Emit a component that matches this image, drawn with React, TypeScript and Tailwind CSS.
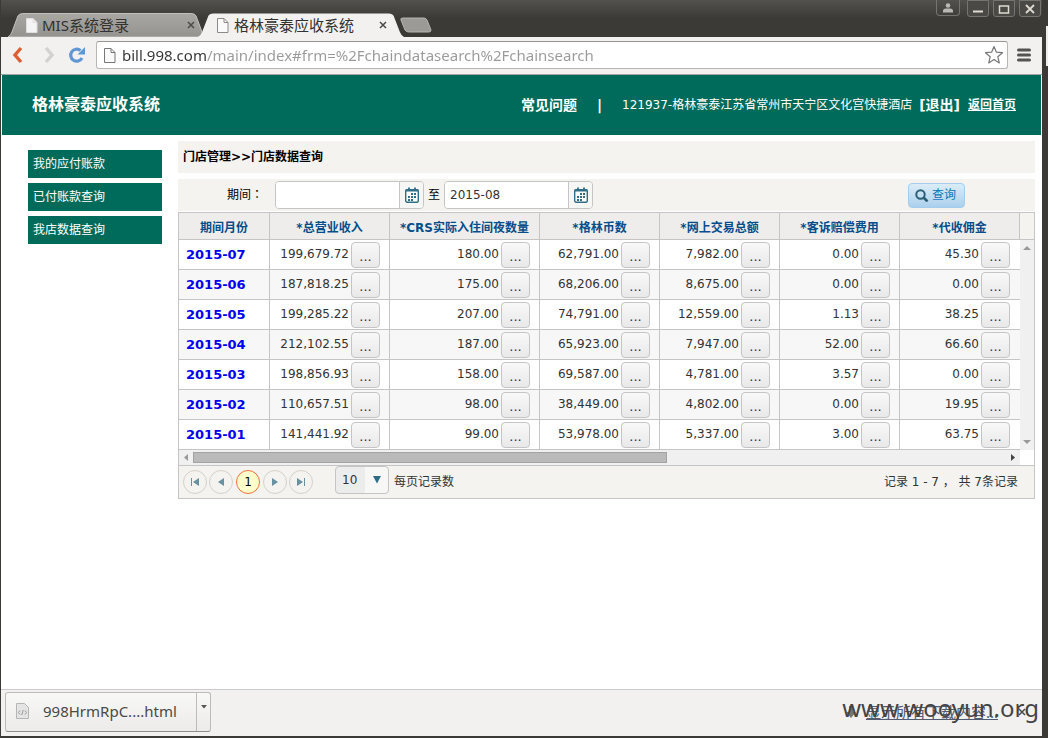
import React, { useState } from "react";
import clsx from "clsx";

const columns = ["*总营业收入", "*CRS实际入住间夜数量", "*格林币数", "*网上交易总额", "*客诉赔偿费用", "*代收佣金"];

const rows = [
  { month: "2015-07", values: ["199,679.72", "180.00", "62,791.00", "7,982.00", "0.00", "45.30"] },
  { month: "2015-06", values: ["187,818.25", "175.00", "68,206.00", "8,675.00", "0.00", "0.00"] },
  { month: "2015-05", values: ["199,285.22", "207.00", "74,791.00", "12,559.00", "1.13", "38.25"] },
  { month: "2015-04", values: ["212,102.55", "187.00", "65,923.00", "7,947.00", "52.00", "66.60"] },
  { month: "2015-03", values: ["198,856.93", "158.00", "69,587.00", "4,781.00", "3.57", "0.00"] },
  { month: "2015-02", values: ["110,657.51", "98.00", "38,449.00", "4,802.00", "0.00", "19.95"] },
  { month: "2015-01", values: ["141,441.92", "99.00", "53,978.00", "5,337.00", "3.00", "63.75"] },
];

const menuItems = ["我的应付账款", "已付账款查询", "我店数据查询"];

const PageIcon = ({ fill, stroke, className }: { fill: string; stroke: string; className?: string }) => (
  <svg width="12" height="15" viewBox="0 0 12 15" className={clsx("shrink-0", className)}>
    <path d="M.5 .5h6.5l4 4v10H.5z" fill={fill} stroke={stroke} />
    <path d="M7 .5v4h4" fill="none" stroke={stroke} />
  </svg>
);

const CloseIcon = ({ className }: { className?: string }) => (
  <svg width="8" height="8" viewBox="0 0 8 8" className={className}>
    <path d="M1 1l6 6M7 1L1 7" stroke="#4a4a48" strokeWidth="1.500" />
  </svg>
);

const Tab = ({ title, active }: { title: string; active?: boolean }) => (
  <div className={clsx("relative flex h-6 items-center", active ? "-ml-2 w-[206px] pl-[19px]" : "w-[198px] pl-[18px]")}>
    <svg viewBox="0 0 200 24" preserveAspectRatio="none" className="absolute inset-0 h-full w-full">
      <defs>
        <linearGradient id="tabShade" x1="0" y1="0" x2="0" y2="1">
          <stop offset="0" stopColor="#a8a7a4" />
          <stop offset="1" stopColor="#949390" />
        </linearGradient>
      </defs>
      <path
        d="M0 24Q3 22 4 19L10 3Q11 .5 15 .5H185Q189 .5 190 3L196 19Q197 22 200 24z"
        fill={active ? "#f2f1f0" : "url(#tabShade)"}
        stroke={active ? "none" : "#c0bfbb"}
        strokeWidth="1"
      />
    </svg>
    <PageIcon
      fill={active ? "#fafafa" : "#f4f4f4"}
      stroke={active ? "#8a8a8a" : "#dedede"}
      className="relative"
    />
    <span className={clsx("relative flex-1 text-[15px] leading-6 text-[#33322e]", active ? "ml-[5px]" : "ml-1")}>{title}</span>
    <button type="button" aria-label={"关闭 " + title} className={clsx("relative", active ? "mr-[17px]" : "mr-[11px]")}>
      <CloseIcon />
    </button>
  </div>
);

const WindowButton = ({ label, children }: { label: string; children: React.ReactNode }) => (
  <button
    type="button"
    aria-label={label}
    className="flex h-[17px] w-[22px] items-center justify-center rounded-b-[3px] border border-[#75746f] bg-[#4a4945]"
  >
    {children}
  </button>
);

const TitleBar = () => (
  <div className="flex h-[37px] items-start bg-linear-to-b from-[#52514c] to-[#3b3a36] to-50%">
    <div className="flex items-end self-end pl-[7px]">
      <Tab title="MIS系统登录" />
      <Tab title="格林豪泰应收系统" active />
      <button type="button" aria-label="新标签页" className="-ml-1 mb-1">
        <svg width="32" height="16" viewBox="0 0 32 16">
          <path d="M1 3Q0 1 3 1H24Q26 1 27 3L31 13Q31 15 29 15H9Q6 15 5 13z" fill="#9b9a97" stroke="#b5b4b0" />
        </svg>
      </button>
    </div>
    <div className="ml-auto flex gap-1 pr-px">
      <button
        type="button"
        aria-label="用户"
        className="mr-[3px] flex h-4 w-6 items-center justify-center rounded-b-[4px] border border-t-0 border-[#75746f]"
      >
        <svg width="10" height="10" viewBox="0 0 10 10" fill="#b9b8b4">
          <circle cx="5" cy="2.500" r="2.300" />
          <path d="M0 9.500V8Q0 5.500 3 5.500H7Q10 5.500 10 8V9.500z" />
        </svg>
      </button>
      <WindowButton label="最小化">
        <svg width="12" height="10"><path d="M1 7.500h10" stroke="#dfdbd2" strokeWidth="2" /></svg>
      </WindowButton>
      <WindowButton label="最大化">
        <svg width="12" height="10"><path d="M1.500 2h9v7h-9z" fill="none" stroke="#dfdbd2" strokeWidth="1.500" /></svg>
      </WindowButton>
      <WindowButton label="关闭">
        <svg width="12" height="10"><path d="M2 1l8 8M10 1L2 9" stroke="#dfdbd2" strokeWidth="1.800" /></svg>
      </WindowButton>
    </div>
  </div>
);

const Toolbar = () => (
  <div className="flex h-[38px] items-center border-b border-[#a5a4a2] bg-[#f2f1f0] pr-[11px] pb-px pl-[10px]">
    <button type="button" aria-label="后退">
      <svg width="14" height="18" viewBox="0 0 14 18">
        <path d="M10 2L4 9l6 7" fill="none" stroke="#dd6032" strokeWidth="3.400" />
      </svg>
    </button>
    <button type="button" aria-label="前进" className="ml-[17px]">
      <svg width="14" height="18" viewBox="0 0 14 18">
        <path d="M4 2l6 7-6 7" fill="none" stroke="#d3d1ce" strokeWidth="3.400" />
      </svg>
    </button>
    <button type="button" aria-label="重新加载" className="ml-3">
      <svg width="18" height="18" viewBox="0 0 18 18">
        <path d="M14 12A6 6 0 1 1 12.500 4.500" fill="none" stroke="#5f97d4" strokeWidth="3.200" />
        <path d="M17 1v7.500H9.500z" fill="#5f97d4" />
      </svg>
    </button>
    <div className="ml-[10px] flex h-7 flex-1 items-center rounded-[3px] border border-[#b8b6b3] border-t-[#989795] bg-white pr-[3px] pl-[7px]">
      <PageIcon fill="#fafafa" stroke="#777777" />
      <input
        aria-label="地址栏"
        defaultValue="bill.998.com/main/index#frm=%2Fchaindatasearch%2Fchainsearch"
        className="ml-[6px] h-6 min-w-0 flex-1 bg-[linear-gradient(90deg,#333333_85px,#999999_85px)] bg-clip-text text-[15px] text-transparent outline-none"
      />
      <button type="button" aria-label="收藏">
        <svg width="20" height="20" viewBox="0 0 20 20">
          <path
            d="M10 1.500l2.400 5.700 6.100.5-4.700 4 1.500 6.200-5.300-3.300-5.300 3.300 1.500-6.200-4.700-4 6.100-.5z"
            fill="#fff"
            stroke="#777"
            strokeWidth="1.200"
            strokeLinejoin="round"
          />
        </svg>
      </button>
    </div>
    <button type="button" aria-label="菜单" className="ml-[9px]">
      <svg width="14" height="14" viewBox="0 0 14 14">
        <path d="M1.500 2h11M1.500 7h11M1.500 12h11" stroke="#55534f" strokeWidth="3" strokeLinecap="round" />
      </svg>
    </button>
  </div>
);

const DateField = ({ label, initial }: { label: string; initial: string }) => (
  <div className="flex h-7 w-[149px] overflow-hidden rounded-[4px] border border-[#c5c5c5]">
    <input aria-label={label} defaultValue={initial} className="min-w-0 flex-1 bg-white pl-[5px] text-xs text-[#333333] outline-none" />
    <button
      type="button"
      aria-label={label + "日历"}
      className="flex w-6 items-center justify-center border-l border-[#c5c5c5] bg-[#f6f6f4]"
    >
      <svg width="14" height="16" viewBox="0 0 14 16">
        <rect x=".7" y="2.700" width="12.600" height="12.600" rx="1.500" fill="#fff" stroke="#2e6e86" strokeWidth="1.400" />
        <path d="M.5 3.500h13" stroke="#2e6e86" strokeWidth="2" />
        <path d="M4 .5v3M10 .5v3" stroke="#2e6e86" strokeWidth="1.800" />
        <path d="M6 7h6M3 10h8M3 13h5" stroke="#2e6e86" strokeWidth="2" strokeDasharray="2 1" />
      </svg>
    </button>
  </div>
);

const PagerButton = ({ label, d }: { label: string; d: string }) => (
  <button type="button" aria-label={label} className="flex h-6 w-6 items-center justify-center rounded-full border border-[#d4d1ca]">
    <svg width="10" height="8" viewBox="0 0 10 8" fill="#6790a0">
      <path d={d} />
    </svg>
  </button>
);

const DataGrid = () => {
  const [pageSize, setPageSize] = useState("10");

  return (
    <div className="mt-px border border-[#c5c5c5] text-[#333333]">
      <div className="flex">
        <div className="min-w-0 flex-1">
          <table className="w-full table-fixed border-separate border-spacing-0 text-xs">
            <colgroup>
              <col className="w-[91px]" />
              <col className="w-[120px]" />
              <col className="w-[150px]" />
              <col className="w-[120px]" />
              <col className="w-[120px]" />
              <col className="w-[120px]" />
              <col className="w-[120px]" />
            </colgroup>
            <thead>
              <tr className="h-[27px] bg-[#eeedeb] text-[#064d8b]">
                {["期间月份", ...columns].map((name) => (
                  <th key={name} scope="col" className="border-r border-b border-[#c5c5c5] p-0 pt-1 font-bold whitespace-nowrap">
                    {name}
                  </th>
                ))}
              </tr>
            </thead>
            <tbody>
              {rows.map((row) => (
                <tr key={row.month} className="h-[30px] odd:bg-white even:bg-[#f7f7f7]">
                  <td className="border-r border-b border-[#c5c5c5] p-0 pl-[7px]">
                    <a href={"#" + row.month} className="text-[13px] font-bold text-[#0000ee]">
                      {row.month}
                    </a>
                  </td>
                  {row.values.map((value, i) => (
                    <td key={i} className="border-r border-b border-[#c5c5c5] p-0 pr-[9px] last:border-r-0 last:pr-[10px]">
                      <div className="flex items-center justify-end">
                        <span className="pb-[2px]">{value}</span>
                        <button
                          type="button"
                          aria-label={row.month + " " + columns[i]}
                          className="ml-[2px] h-[26px] w-[29px] rounded-[4px] border border-[#c5c5c5] bg-linear-to-b from-[#f8f8f8] to-[#e9e9e9] pt-1 text-[13px] leading-5"
                        >
                          ...
                        </button>
                      </div>
                    </td>
                  ))}
                </tr>
              ))}
            </tbody>
          </table>
          {/* Horizontal scrollbar */}
          <div className="flex h-[15px] items-center bg-[#f0f0f0]">
            <svg width="14" height="9" viewBox="0 0 14 9"><path d="M9 1v7L5 4.500z" fill="#999" /></svg>
            <div className="h-[11px] w-[474px] border border-[#a3a3a3] bg-[#bababa]" />
            <svg width="14" height="9" viewBox="0 0 14 9" className="ml-auto"><path d="M5 1v7l4-3.500z" fill="#444" /></svg>
          </div>
        </div>
        {/* Vertical scrollbar */}
        <div className="flex w-[14px] flex-col">
          <div className="h-[27px] border-b border-[#c5c5c5] bg-[#f4f3ef]" />
          <div className="flex flex-1 flex-col items-center justify-between bg-[#f0f0f0] py-[5px]">
            <svg width="8" height="5" viewBox="0 0 8 5"><path d="M0 5h8L4 1z" fill="#999" /></svg>
            <svg width="8" height="5" viewBox="0 0 8 5"><path d="M0 0h8L4 4z" fill="#999" /></svg>
          </div>
          <div className="h-[15px] bg-white" />
        </div>
      </div>

      <div className="flex h-[33px] items-center border-t border-[#c5c5c5] bg-[#f4f3ef] pr-4 pl-1 text-xs">
        <div className="flex gap-[2px]">
          <PagerButton label="第一页" d="M1 0h1v8H1zM9 0v8L3 4z" />
          <PagerButton label="上一页" d="M8 0v8L2 4z" />
          <button type="button" className="mx-px h-6 w-6 rounded-full border border-[#f0703c] bg-[#ffffcc] leading-5 text-black">
            1
          </button>
          <PagerButton label="下一页" d="M2 0v8l6-4z" />
          <PagerButton label="最后一页" d="M8 0h1v8H8zM1 0v8l6-4z" />
        </div>
        <div className="relative mr-[5px] mb-1 ml-[22px]">
          <select
            id="page-size"
            value={pageSize}
            onChange={(e) => setPageSize(e.target.value)}
            className="h-7 w-[54px] appearance-none rounded-[4px] border border-[#c5c5c5] bg-linear-to-r from-[#ececec] from-55% to-[#f7f7f6] to-55% pl-[6px]"
          >
            <option>10</option>
            <option>20</option>
            <option>50</option>
          </select>
          <svg width="8" height="8" viewBox="0 0 8 8" className="pointer-events-none absolute top-[10px] right-2">
            <path d="M0 0h8L4 7.500z" fill="#2e6e86" />
          </svg>
        </div>
        <label htmlFor="page-size">每页记录数</label>
        <span className="ml-auto">记录 1 - 7 ， 共 7条记录</span>
      </div>
    </div>
  );
};

const DownloadBar = () => (
  <div className="relative flex h-[47px] items-center border-t border-[#cccccc] bg-[#f2f1f0] pr-4 pb-[2px] pl-1 text-[#4a4947]">
    <div className="flex h-10 w-[206px] rounded-[3px] border border-[#bdbbb8] border-b-[#8f8d8a] bg-linear-to-b from-[#f8f8f7] to-[#ecebea]">
      <button type="button" className="flex flex-1 items-center pb-[2px] pl-[10px] text-[15px]">
        <svg width="13" height="16" viewBox="0 0 13 16">
          <path d="M.5 .5h8l4 4v11H.5z" fill="#e4e4e4" stroke="#b5b5b5" />
          <path d="M4 7.500L2.500 9.500 4 11.500M9 7.500l1.500 2L9 11.500M7.200 7l-1.400 5" fill="none" stroke="#999" />
        </svg>
        <span className="ml-[14px]">998HrmRpC....html</span>
      </button>
      <button type="button" aria-label="下载选项" className="flex w-[14px] justify-center border-l border-[#bdbbb8] pt-3">
        <svg width="6" height="4" viewBox="0 0 6 4"><path d="M0 0h6L3 3.500z" fill="#555" /></svg>
      </button>
    </div>
    <svg width="10" height="12" viewBox="0 0 10 12" className="ml-auto">
      <path d="M3 0h4v6h3l-5 6-5-6h3z" fill="#77756f" />
    </svg>
    <a href="#downloads" className="ml-[10px] text-[15px] text-[#4f5b72] underline">显示所有下载内容...</a>
    <button type="button" aria-label="关闭下载栏" className="ml-5">
      <CloseIcon />
    </button>
    <span className="pointer-events-none absolute right-[3px] bottom-[14px] text-2xl leading-7 text-[#444444]">www.wooyun.org</span>
  </div>
);

const App: React.FC = () => {
  return (
    <div className="flex min-h-screen bg-[#3b3a36] pb-[2px] pl-px font-['Noto_Sans','Noto_Sans_CJK_SC',sans-serif]">
      <div className="flex min-w-0 flex-1 flex-col bg-white">
        <TitleBar />
        <Toolbar />

        <div className="flex flex-1 flex-col px-px font-['DejaVu_Sans','Noto_Sans_CJK_SC',sans-serif] text-xs">
          <header className="flex h-[60px] items-center bg-[#006b5a] pr-[25px] pl-[30px] text-white">
            <h1 className="text-base font-bold">格林豪泰应收系统</h1>
            <a href="#faq" className="ml-auto text-sm font-bold">常见问题</a>
            <span className="ml-5 text-sm font-bold">|</span>
            <span className="ml-5">121937-格林豪泰江苏省常州市天宁区文化宫快捷酒店</span>
            <a href="#logout" className="ml-[7px] text-sm font-bold">[退出]</a>
            <a href="#home" className="ml-2 font-bold underline">返回首页</a>
          </header>

          <div className="flex flex-1 items-start pr-[6px] pl-[26px]">
            <nav className="mt-[15px] mr-4 flex w-[134px] shrink-0 flex-col gap-[5px]">
              {menuItems.map((item) => (
                <a key={item} href={"#" + item} className="flex h-7 items-center bg-[#006b5a] pl-[5px] text-white">
                  {item}
                </a>
              ))}
            </nav>

            <main className="mt-[6px] min-w-0 flex-1">
              <h2 className="h-8 bg-[#f4f3ef] pl-[5px] font-bold leading-8 text-black">门店管理&gt;&gt;门店数据查询</h2>
              <form className="mt-[6px] flex h-8 items-center bg-[#f4f3ef] pr-[70px] pl-[49px] text-black" onSubmit={(e) => e.preventDefault()}>
                <span className="w-12 font-['DejaVu_Sans','Noto_Sans_CJK_TC',sans-serif]">期间：</span>
                <DateField label="开始期间" initial="" />
                <span className="mx-1">至</span>
                <DateField label="结束期间" initial="2015-08" />
                <button
                  type="submit"
                  className="ml-auto flex h-[25px] w-[57px] items-center rounded-[4px] border border-[#a3cdec] bg-linear-to-b from-[#dcecf7] to-[#abd0ec] pl-[6px] text-[#0a78b4]"
                >
                  <svg width="14" height="14" viewBox="0 0 14 14" fill="none" stroke="#2a5f76">
                    <circle cx="5.500" cy="6.500" r="4.200" strokeWidth="2" />
                    <path d="M8.500 9.500l4 4" strokeWidth="2.600" />
                  </svg>
                  <span className="ml-[3px]">查询</span>
                </button>
              </form>
              <DataGrid />
            </main>
          </div>
        </div>

        <DownloadBar />
      </div>

      {/* Edge of the window behind */}
      <div className="flex w-[6px] shrink-0 justify-end">
        <div className="mt-[26px] h-10 w-[2px] bg-[#eeedeb]" />
      </div>
    </div>
  );
};

export default App;
